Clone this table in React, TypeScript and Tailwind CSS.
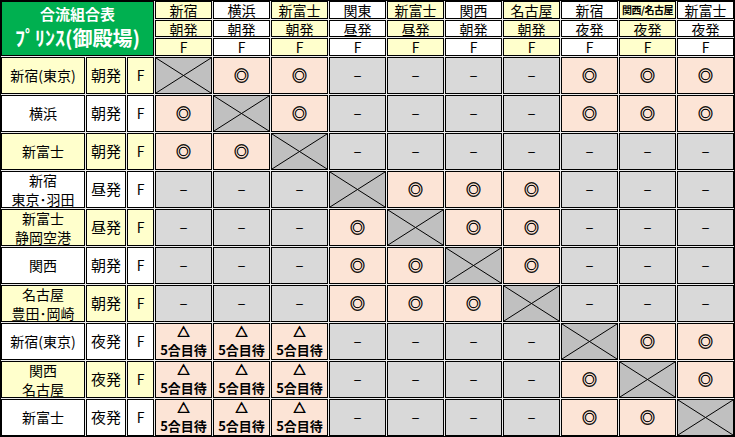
import React from "react";

type Kind = "o" | "-" | "x" | "t";

const cols = [
  { name: "新宿", time: "朝発" },
  { name: "横浜", time: "朝発" },
  { name: "新富士", time: "朝発" },
  { name: "関東", time: "昼発" },
  { name: "新富士", time: "昼発" },
  { name: "関西", time: "朝発" },
  { name: "名古屋", time: "朝発" },
  { name: "新宿", time: "夜発" },
  { name: "関西/名古屋", time: "夜発", small: true },
  { name: "新富士", time: "夜発" },
];

const rows: { lines: string[]; time: string; cells: Kind[] }[] = [
  { lines: ["新宿(東京)"], time: "朝発", cells: ["x", "o", "o", "-", "-", "-", "-", "o", "o", "o"] },
  { lines: ["横浜"], time: "朝発", cells: ["o", "x", "o", "-", "-", "-", "-", "o", "o", "o"] },
  { lines: ["新富士"], time: "朝発", cells: ["o", "o", "x", "-", "-", "-", "-", "-", "-", "-"] },
  { lines: ["新宿", "東京･羽田"], time: "昼発", cells: ["-", "-", "-", "x", "o", "o", "o", "-", "-", "-"] },
  { lines: ["新富士", "静岡空港"], time: "昼発", cells: ["-", "-", "-", "o", "x", "o", "o", "-", "-", "-"] },
  { lines: ["関西"], time: "朝発", cells: ["-", "-", "-", "o", "o", "x", "o", "-", "-", "-"] },
  { lines: ["名古屋", "豊田･岡崎"], time: "朝発", cells: ["-", "-", "-", "o", "o", "o", "x", "-", "-", "-"] },
  { lines: ["新宿(東京)"], time: "夜発", cells: ["t", "t", "t", "-", "-", "-", "-", "x", "o", "o"] },
  { lines: ["関西", "名古屋"], time: "夜発", cells: ["t", "t", "t", "-", "-", "-", "-", "o", "x", "o"] },
  { lines: ["新富士"], time: "夜発", cells: ["t", "t", "t", "-", "-", "-", "-", "o", "o", "x"] },
];

const Cell = ({ className = "", children }: { className?: string; children?: React.ReactNode }) => (
  <div className={`flex items-center justify-center overflow-hidden border border-black ${className}`}>
    {children}
  </div>
);

const DataCell = ({ kind }: { kind: Kind }) => {
  if (kind === "x") {
    return (
      <Cell className="bg-[#c0c0c0]">
        <svg className="h-full w-full" viewBox="0 0 100 100" preserveAspectRatio="none">
          <line x1="0" y1="0" x2="100" y2="100" stroke="black" strokeWidth="1" vectorEffect="non-scaling-stroke" />
          <line x1="100" y1="0" x2="0" y2="100" stroke="black" strokeWidth="1" vectorEffect="non-scaling-stroke" />
        </svg>
      </Cell>
    );
  }
  if (kind === "-") {
    return <Cell className="bg-[#d9d9d9] text-[15px]">–</Cell>;
  }
  if (kind === "o") {
    return (
      <Cell className="bg-[#fce4d6] text-[15px] font-bold [-webkit-text-stroke:0.4px_black]">◎</Cell>
    );
  }
  return (
    <Cell className="flex-col bg-[#fce4d6] font-bold">
      <span className="text-[12px] leading-[16px] [-webkit-text-stroke:0.7px_black]">△</span>
      <span className="text-[13px] leading-[19px]">5合目待</span>
    </Cell>
  );
};

export default function App() {
  return (
    <div className="w-[735px] h-[437px] bg-black p-px font-['Noto_Sans_CJK_JP',sans-serif] text-black">
      <div className="grid grid-cols-[84px_40px_27px_repeat(10,57px)] grid-rows-[18px_17px_18px_repeat(10,37px)] gap-px bg-[#ececec]">
        <div className="col-span-3 row-span-3 flex flex-col items-center border border-black bg-[#00b050] pt-px font-bold text-white">
          <span className="text-[15px] leading-[22px]">合流組合表</span>
          <span className="text-[20px] leading-[26px]">ﾌﾟﾘﾝｽ(御殿場)</span>
        </div>
        {cols.map((c, i) => (
          <Cell
            key={`n${i}`}
            className={`${i % 2 === 0 ? "bg-[#ffffcc]" : "bg-white"} ${c.small ? "text-[10px] font-bold tracking-[-0.5px]" : "text-[14px]"} leading-none`}
          >
            {c.name}
          </Cell>
        ))}
        {cols.map((c, i) => (
          <Cell key={`t${i}`} className={`${i % 2 === 0 ? "bg-[#ffffcc]" : "bg-white"} text-[14px] leading-none`}>
            {c.time}
          </Cell>
        ))}
        {cols.map((_, i) => (
          <Cell key={`f${i}`} className={`${i % 2 === 0 ? "bg-[#ffffcc]" : "bg-white"} text-[14px] leading-none`}>
            F
          </Cell>
        ))}
        {rows.map((r, ri) => {
          const bg = ri % 2 === 0 ? "bg-[#ffffcc]" : "bg-white";
          return (
            <React.Fragment key={ri}>
              <Cell className={`${bg} text-[14px] leading-[19px]`}>
                <span className="text-center">
                  {r.lines[0]}
                  {r.lines[1] && (
                    <>
                      <br />
                      {r.lines[1]}
                    </>
                  )}
                </span>
              </Cell>
              <Cell className={`${bg} text-[15px]`}>{r.time}</Cell>
              <Cell className={`${bg} text-[14px]`}>F</Cell>
              {r.cells.map((k, ci) => (
                <DataCell key={ci} kind={k} />
              ))}
            </React.Fragment>
          );
        })}
      </div>
    </div>
  );
}
